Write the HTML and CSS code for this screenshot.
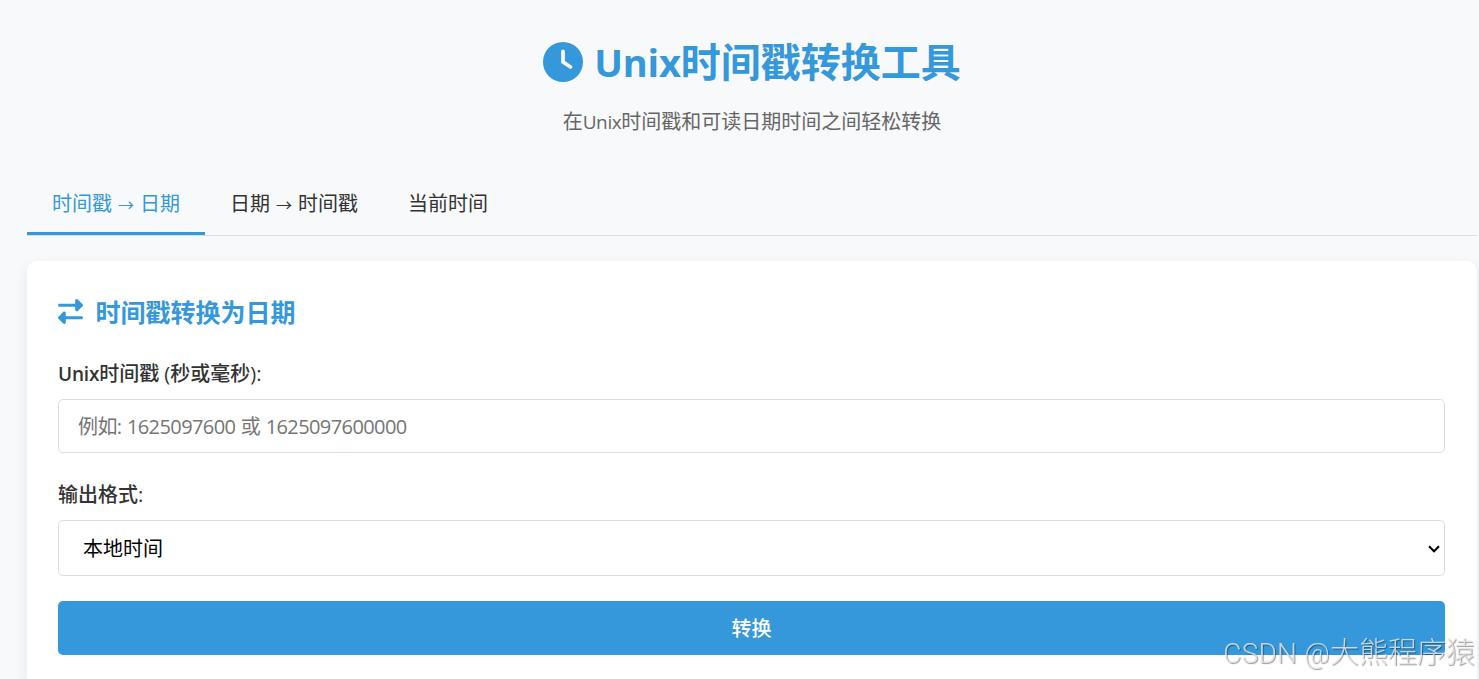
FILE: index.html
```html
<!DOCTYPE html>
<html lang="zh-CN">
<head>
    <meta charset="UTF-8">
    <meta name="viewport" content="width=device-width, initial-scale=1.0">
    <title>Unix时间戳转换工具</title>
    <link rel="stylesheet" href="styles.css">
</head>
<body>

<div class="container">
    <header>
        <h1>
            <svg class="icon-clock" viewBox="0 0 512 512" fill="currentColor"><path d="M256 0a256 256 0 1 1 0 512A256 256 0 1 1 256 0zM232 120V256c0 8 4 15.500 10.700 20l96 64c11 7.400 25.900 4.400 33.300-6.700s4.400-25.900-6.700-33.300L280 243.200V120c0-13.300-10.700-24-24-24s-24 10.700-24 24z"/></svg>
            <span><span class="latin">Unix</span>时间戳转换工具</span>
        </h1>
        <p class="subtitle">在<span class="latin">Unix</span>时间戳和可读日期时间之间轻松转换</p>
    </header>

    <div class="tabs">
        <div class="tab active">时间戳<span class="arrow">→</span>日期</div>
        <div class="tab">日期<span class="arrow">→</span>时间戳</div>
        <div class="tab">当前时间</div>
    </div>

    <div class="card">
        <h2>
            <svg class="icon-exchange" viewBox="0 0 512 512" fill="currentColor"><path d="M32 96H352V32c0-12.900 7.800-24.600 19.800-29.600s25.700-2.200 34.900 6.900l96 96c6 6 9.400 14.100 9.400 22.600s-3.400 16.600-9.400 22.600l-96 96c-9.200 9.200-22.900 11.900-34.900 6.900s-19.800-16.600-19.800-29.600V160H32c-17.700 0-32-14.300-32-32s14.300-32 32-32zM480 352c17.700 0 32 14.300 32 32s-14.300 32-32 32H160v64c0 12.900-7.800 24.600-19.800 29.600s-25.700 2.200-34.900-6.900l-96-96c-6-6-9.400-14.100-9.400-22.600s3.400-16.600 9.400-22.600l96-96c9.200-9.200 22.900-11.900 34.900-6.900s19.800 16.600 19.800 29.600v64H480z"/></svg>
            <span>时间戳转换为日期</span>
        </h2>

        <div class="form-group">
            <label for="timestamp"><span class="latin">Unix</span>时间戳 (秒或毫秒):</label>
            <input type="text" id="timestamp" placeholder="例如: 1625097600 或 1625097600000">
        </div>

        <div class="form-group">
            <label for="format">输出格式:</label>
            <div class="select-wrap">
                <select id="format">
                    <option>本地时间</option>
                </select>
                <svg class="chevron" viewBox="0 0 12 8" fill="none" stroke="#000" stroke-width="2"><path d="M1 1.300l5 5 5-5"/></svg>
            </div>
        </div>

        <button class="btn">转换</button>
    </div>
</div>

<div class="watermark"><span class="watermark-site">CSDN @</span>大熊程序猿</div>

</body>
</html>
```
FILE: styles.css
```css
* {
    box-sizing: border-box;
    margin: 0;
    padding: 0;
}

body {
    font-family: "Open Sans", "Noto Sans CJK SC", sans-serif;
    font-size: 20px;
    line-height: 32px;
    color: #333;
    background-color: #f8f9fb;
}

.container {
    padding: 25px 2px 0 27px;
}

/* Header */
header {
    text-align: center;
    margin-bottom: 34px;
}

h1 {
    display: flex;
    justify-content: center;
    align-items: center;
    gap: 11px;
    height: 74px;
    font-size: 40px;
    line-height: 64px;
    font-weight: 700;
    color: #3498db;
}

.icon-clock {
    width: 40px;
    height: 40px;
}

.latin {
    font-size: 0.95em;
    letter-spacing: -0.4px;
}

h1 .latin {
    letter-spacing: -0.2px;
}

.subtitle {
    margin-top: 7px;
    color: #666;
}

/* Tabs */
.tabs {
    display: flex;
    border-bottom: 1px solid #ddd;
    margin-bottom: 25px;
}

.tab {
    height: 63px;
    padding: 16px 25px 0;
    border-bottom: 3px solid transparent;
}

.tab.active {
    color: #3498db;
    border-bottom-color: #3498db;
}

.arrow {
    display: inline-block;
    width: 28px;
    font-size: 16px;
    text-align: center;
}

/* Card */
.card {
    height: 418px;
    padding: 31px 32px 0 31px;
    background-color: #fff;
    border-radius: 10px 10px 0 0;
    box-shadow: 0 5px 15px rgba(0, 0, 0, 0.08);
    clip-path: inset(-20px -20px 0 -20px);
}

h2 {
    display: flex;
    align-items: center;
    gap: 12.5px;
    height: 40px;
    margin-bottom: 26px;
    font-size: 25px;
    line-height: 40px;
    color: #3498db;
}

.icon-exchange {
    width: 25px;
    height: 25px;
    margin-bottom: 1px;
}

.form-group {
    margin-bottom: 25px;
}

.form-group + .form-group {
    padding-top: 1px;
}

label {
    display: block;
    margin-bottom: 9px;
    font-weight: 500;
    line-height: 32px;
}

label .latin {
    font-weight: 600;
    letter-spacing: -0.2px;
}

input,
select {
    display: block;
    width: 100%;
    font-family: inherit;
    font-size: 20px;
    border: 1px solid #ddd;
    border-radius: 5px;
    background-color: #fff;
}

input {
    height: 54px;
    padding: 0 19px;
    letter-spacing: -0.6px;
    word-spacing: 0.9px;
}

input::placeholder {
    color: #757575;
}

.select-wrap {
    position: relative;
}

select {
    height: 56px;
    padding: 0 24px;
    color: #000;
    appearance: none;
}

.chevron {
    position: absolute;
    right: 5px;
    top: 25px;
    width: 12px;
    height: 8px;
    pointer-events: none;
}

.btn {
    display: block;
    width: 100%;
    height: 54px;
    padding-bottom: 2px;
    border: none;
    border-radius: 5px;
    background-color: #3498db;
    color: #fff;
    font-family: inherit;
    font-size: 20px;
    font-weight: 500;
}

/* Watermark */
.watermark {
    position: fixed;
    right: 4px;
    bottom: 3px;
    font-family: "Liberation Sans", "Noto Sans CJK SC", sans-serif;
    font-size: 29px;
    line-height: 44px;
    color: rgba(228, 228, 228, 0.85);
    text-shadow: 1px 1px 1px rgba(0, 0, 0, 0.4);
    font-weight: 300;
}

.watermark-site {
    font-family: Roboto, "Liberation Sans", sans-serif;
    font-size: 28px;
    letter-spacing: 0.2px;
}
```
